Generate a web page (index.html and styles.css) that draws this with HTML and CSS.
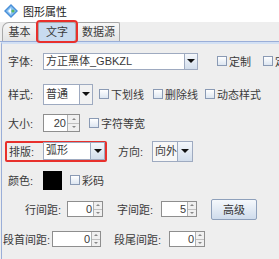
FILE: index.html
```html
<!DOCTYPE html>
<html lang="zh">
<head>
    <meta charset="UTF-8">
    <title>图形属性</title>
    <link rel="stylesheet" href="styles.css">
</head>
<body>
    <!-- 标题栏 -->
    <div class="titlebar">
        <svg class="app-icon" width="14" height="14" viewBox="0 0 14 14">
            <path d="M7 0 L14 7 L7 14 L0 7 Z" fill="#4a8fd8"/>
            <path d="M7 2 L12 7 L7 12 L2 7 Z" fill="#8cc4f2"/>
            <path d="M4 7 L7 4 L7 10 Z" fill="#ffffff"/>
            <circle cx="9" cy="7" r="1.6" fill="#5cb85c"/>
        </svg>
        <span class="title">图形属性</span>
    </div>

    <!-- 选项卡 -->
    <div class="tabs">
        <div class="tab first">基本</div>
        <div class="tab active">文字</div>
        <div class="tab last">数据源</div>
    </div>

    <div class="panel">
        <div class="row">
            <span class="label">字体:</span>
            <div class="combo font-combo">
                <span class="combo-text">方正黑体_GBKZL</span>
                <span class="combo-btn"><i class="arrow"></i></span>
            </div>
            <label class="check ml-19"><i class="box"></i>定制</label>
            <label class="check ml-12"><i class="box"></i>定制</label>
        </div>

        <div class="row row-2">
            <span class="label">样式:</span>
            <div class="combo style-combo">
                <span class="combo-text">普通</span>
                <span class="combo-btn"><i class="arrow"></i></span>
            </div>
            <label class="check ml-6"><i class="box"></i>下划线</label>
            <label class="check ml-9"><i class="box"></i>删除线</label>
            <label class="check ml-7"><i class="box"></i>动态样式</label>
        </div>

        <div class="row">
            <span class="label">大小:</span>
            <div class="spinner size-spin">
                <span class="spin-text">20</span>
                <span class="spin-btns"><i class="up"></i><i class="down"></i></span>
            </div>
            <label class="check ml-9"><i class="box"></i>字符等宽</label>
        </div>

        <div class="row row-4">
            <div class="highlight">
                <span class="label">排版:</span>
                <div class="combo layout-combo">
                    <span class="combo-text">弧形</span>
                    <span class="combo-btn"><i class="arrow"></i></span>
                </div>
            </div>
            <span class="label dir-label">方向:</span>
            <div class="combo dir-combo">
                <span class="combo-text">向外</span>
                <span class="combo-btn"><i class="arrow"></i></span>
            </div>
        </div>

        <div class="row">
            <span class="label">颜色:</span>
            <span class="swatch"></span>
            <label class="check ml-8"><i class="box"></i>彩码</label>
        </div>

        <div class="row">
            <span class="label line-label">行间距:</span>
            <div class="spinner gap-spin">
                <span class="spin-text">0</span>
                <span class="spin-btns"><i class="up"></i><i class="down"></i></span>
            </div>
            <span class="label char-label">字间距:</span>
            <div class="spinner gap-spin">
                <span class="spin-text">5</span>
                <span class="spin-btns"><i class="up"></i><i class="down"></i></span>
            </div>
            <button class="btn">高级</button>
        </div>

        <div class="row row-7">
            <span class="label para-label">段首间距:</span>
            <div class="spinner para-spin">
                <span class="spin-text">0</span>
                <span class="spin-btns"><i class="up"></i><i class="down"></i></span>
            </div>
            <span class="label tail-label">段尾间距:</span>
            <div class="spinner gap-spin">
                <span class="spin-text">0</span>
                <span class="spin-btns"><i class="up"></i><i class="down"></i></span>
            </div>
        </div>
    </div>
</body>
</html>
```

FILE: styles.css
```css
* {
    box-sizing: border-box;
}
body {
    margin: 0;
    width: 279px;
    height: 259px;
    overflow: hidden;
    background: #eeeeee;
    color: #3a3a3a;
    font-family: "Liberation Sans", "Noto Sans CJK SC", sans-serif;
    font-size: 11px;
}
.titlebar {
    height: 22px;
    background: #fff;
    display: flex;
    align-items: center;
    padding-left: 4px;
}
.app-icon {
    margin-right: 5px;
}
.title {
    font-size: 11px;
    color: #222;
}
.tabs {
    height: 20px;
    display: flex;
    align-items: flex-end;
    padding-left: 2px;
    border-bottom: 1px solid #9aaed8;
}
.tab {
    height: 19px;
    line-height: 18px;
    margin-right: 1px;
    border: 1px solid #a8a8a8;
    border-bottom: none;
    border-radius: 2px 2px 0 0;
    background: linear-gradient(#f7f7f7, #e4e4e4);
    text-align: center;
}
.tab.first {
    width: 35px;
    border-top-left-radius: 7px;
}
.tab.active {
    width: 38px;
    background: #c8dbf0;
    outline: 2px solid #e8302c;
    border-radius: 2px;
    position: relative;
    z-index: 1;
}
.tab.last {
    width: 43px;
}
.panel {
    height: 217px;
    margin-left: 1px;
    border-left: 1px solid #9aaed8;
    border-top: 2px solid #d2e0f4;
    padding-top: 6px;
    display: flex;
    flex-direction: column;
    gap: 7px;
}
.row {
    height: 22px;
    display: flex;
    align-items: center;
    white-space: nowrap;
}
.row-2 { margin-top: 4px; }
.row-4 { margin-top: -1px; }
.row-7 { margin-top: 1px; }
.label {
    width: 35px;
    margin-left: 6px;
    flex: none;
}
.combo {
    height: 17px;
    display: flex;
    border: 1px solid #9eaac0;
    background: #fff;
    flex: none;
}
.combo-text {
    flex: 1;
    padding-left: 2px;
    line-height: 15px;
}
.combo-btn {
    width: 13px;
    border-left: 1px solid #9eaac0;
    background: linear-gradient(#f4f7fb, #d3deec);
    display: flex;
    align-items: center;
    justify-content: center;
}
.arrow {
    width: 0;
    height: 0;
    border-left: 4px solid transparent;
    border-right: 4px solid transparent;
    border-top: 4px solid #111;
}
.font-combo { width: 155px; }
.style-combo { width: 50px; height: 21px; }
.style-combo .combo-text { line-height: 19px; }
.style-combo .combo-btn { width: 13px; background: #f2f2f2; }
.layout-combo { width: 62px; height: 18px; }
.layout-combo .combo-btn { width: 14px; }
.dir-combo { width: 41px; height: 21px; }
.dir-combo .combo-text { line-height: 19px; padding-left: 2px; background: #f7f7f7; }
.dir-combo .combo-btn { width: 15px; }
.check {
    display: flex;
    align-items: center;
}
.box {
    width: 10px;
    height: 10px;
    border: 1px solid #8a9ab4;
    background: linear-gradient(#ffffff, #dde6f1);
    margin-right: 2px;
}
.ml-19 { margin-left: 19px; }
.ml-12 { margin-left: 12px; }
.ml-9 { margin-left: 9px; }
.ml-8 { margin-left: 8px; }
.ml-7 { margin-left: 7px; }
.ml-6 { margin-left: 6px; }
.spinner {
    height: 16px;
    display: flex;
    border: 1px solid #8e8e8e;
    background: #fff;
    flex: none;
}
.spin-text {
    flex: 1;
    text-align: right;
    padding-right: 1px;
    line-height: 14px;
}
.spin-btns {
    width: 9px;
    border-left: 1px solid #b0b0b0;
    display: flex;
    flex-direction: column;
}
.spin-btns i {
    flex: 1;
    background: #f0f0f0;
    display: flex;
    align-items: center;
    justify-content: center;
}
.spin-btns i + i {
    border-top: 1px solid #c0c0c0;
}
.up::after, .down::after {
    content: "";
    border-left: 2px solid transparent;
    border-right: 2px solid transparent;
}
.up::after { border-bottom: 2px solid #888; }
.down::after { border-top: 2px solid #888; }
.size-spin { width: 37px; height: 18px; }
.size-spin .spin-text { line-height: 16px; }
.size-spin .spin-btns { width: 12px; }
.highlight {
    display: flex;
    align-items: center;
    height: 21px;
    margin-left: 3px;
    padding: 0 0 0 2px;
    border: 2px solid #e8302c;
    border-radius: 2px;
}
.highlight .label { width: 34px; margin-left: 0; }
.dir-label { width: 34px; margin-left: 11px; }
.swatch {
    width: 19px;
    height: 19px;
    background: #000;
    flex: none;
}
.line-label { width: 42px; margin-left: 23px; }
.gap-spin { width: 36px; }
.char-label { width: 44px; margin-left: 14px; }
.para-label { width: 49px; margin-left: 1px; }
.para-spin { width: 49px; }
.tail-label { width: 55px; margin-left: 13px; }
.btn {
    margin-left: 14px;
    width: 46px;
    height: 21px;
    border: 1px solid #8ea0bb;
    border-radius: 2px;
    background: linear-gradient(#f5f8fc, #cfdcec);
    font: inherit;
    color: #333;
    padding: 0;
}
```
